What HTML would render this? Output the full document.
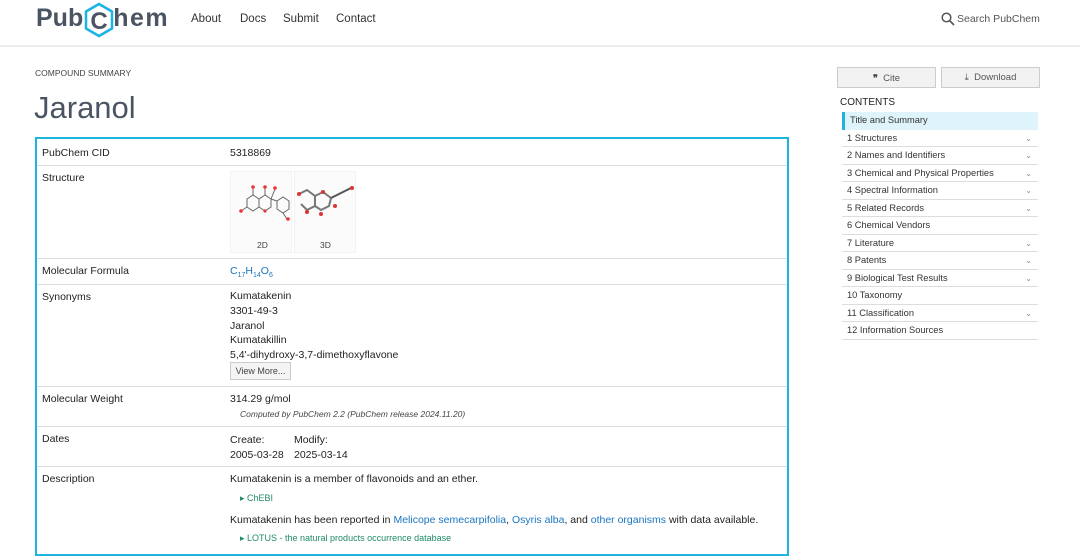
<!DOCTYPE html>
<html><head><meta charset="utf-8"><style>
*{margin:0;padding:0;box-sizing:border-box}
body{width:1080px;height:556px;overflow:hidden;background:#fff;font-family:"Liberation Sans",sans-serif;color:#222;font-size:10.5px;position:relative}
.a{position:absolute;white-space:nowrap}
.hdr{position:absolute;left:0;top:0;width:1080px;height:47px;border-bottom:2px solid #ececec}
.nav{font-size:11.5px;color:#333;top:13px}
.box{position:absolute;left:35px;top:137px;width:754px;height:419px;border:2px solid #1fb4dd}
.sep{position:absolute;left:0;width:750px;height:1px;background:#ddd}
.lbl{position:absolute;left:5px}
.val{position:absolute;left:193px}
.link{color:#1b76c1}
.grn{color:#1f8a6a;font-size:9px}
.toc{position:absolute;left:842px;width:196px;font-size:9.3px;color:#333}
.toc div{height:17.5px;line-height:17px;border-bottom:1px solid #ddd;padding-left:5px;position:relative}
.toc div span{position:absolute;right:6px;color:#888;font-size:8px}
.btn{position:absolute;top:67px;height:21px;border:1px solid #ccc;background:#f2f2f2;font-size:9.5px;color:#555;text-align:center;line-height:20px}
</style></head><body>
<div class="hdr">
<div class="a" style="left:36px;top:4px;font-size:25px;font-weight:bold;color:#4a5462;letter-spacing:0px">Pub<span style="display:inline-block;width:30px"></span><span style="letter-spacing:1.5px">hem</span></div>
<svg class="a" style="left:83px;top:2px" width="32" height="36" viewBox="0 0 32 36"><polygon points="16,2 29,9.5 29,26.5 16,34 3,26.5 3,9.5" fill="none" stroke="#1ab3e6" stroke-width="2.5"/><text x="16" y="27" text-anchor="middle" font-family="Liberation Sans" font-weight="bold" font-size="24" fill="#4a5462">C</text></svg>
<div class="a nav" style="left:191px">About</div>
<div class="a nav" style="left:240px">Docs</div>
<div class="a nav" style="left:283px">Submit</div>
<div class="a nav" style="left:336px">Contact</div>
<svg class="a" style="left:941px;top:12px" width="14" height="14"><circle cx="5.5" cy="5.5" r="4.3" fill="none" stroke="#555" stroke-width="1.5"/><line x1="8.5" y1="8.5" x2="13" y2="13" stroke="#555" stroke-width="1.6"/></svg>
<div class="a" style="left:957px;top:13px;font-size:10.5px;color:#555">Search PubChem</div>
</div>
<div class="a" style="left:35px;top:68px;font-size:8.5px;color:#444">COMPOUND SUMMARY</div>
<div class="a" style="left:34px;top:90px;font-size:31px;color:#4a5462">Jaranol</div>

<div class="box">
<div class="lbl" style="top:8px">PubChem CID</div><div class="val" style="top:8px">5318869</div>
<div class="sep" style="top:26px"></div>
<div class="lbl" style="top:33px">Structure</div>
<div class="a" style="left:193px;top:32px;width:62px;height:82px;background:#fbfbfb;border:1px solid #f2f2f2"></div>
<div class="a" style="left:257px;top:32px;width:62px;height:82px;background:#fbfbfb;border:1px solid #f2f2f2"></div>
<svg class="a" style="left:196px;top:40px" width="58" height="45"><g stroke="#666" fill="none" stroke-width="1"><polygon points="14,20 20,16 26,20 26,28 20,32 14,28"/><polygon points="26,20 32,16 38,20 38,28 32,32 26,28"/><polygon points="44,22 50,18 56,22 56,30 50,34 44,30"/><line x1="38" y1="20" x2="44" y2="22"/><line x1="14" y1="28" x2="8" y2="32"/><line x1="20" y1="16" x2="20" y2="9"/><line x1="32" y1="16" x2="32" y2="9"/><line x1="38" y1="20" x2="42" y2="10"/><line x1="50" y1="34" x2="54" y2="40"/></g><circle cx="20" cy="8" r="1.8" fill="#e33"/><circle cx="32" cy="8" r="1.8" fill="#e33"/><circle cx="42" cy="9" r="1.8" fill="#e33"/><circle cx="8" cy="32" r="1.8" fill="#e33"/><circle cx="32" cy="32" r="1.6" fill="#e33"/><circle cx="55" cy="40" r="1.8" fill="#e33"/></svg>
<svg class="a" style="left:258px;top:45px" width="60" height="35"><g stroke="#777" fill="none" stroke-width="2"><polyline points="4,10 12,6 20,12 20,22 12,26 6,20"/><polyline points="20,12 28,8 36,14 34,22 26,26 20,22"/><line x1="36" y1="14" x2="56" y2="4" stroke="#555"/></g><circle cx="4" cy="10" r="2" fill="#d33"/><circle cx="12" cy="28" r="2" fill="#d33"/><circle cx="26" cy="30" r="2" fill="#d33"/><circle cx="40" cy="22" r="2" fill="#d33"/><circle cx="57" cy="4" r="2" fill="#d33"/><circle cx="28" cy="8" r="2" fill="#d33"/></svg>
<div class="a" style="left:220px;top:101px;font-size:8.5px;color:#444">2D</div>
<div class="a" style="left:283px;top:101px;font-size:8.5px;color:#444">3D</div>
<div class="sep" style="top:119px"></div>
<div class="lbl" style="top:126px">Molecular Formula</div><div class="val link" style="top:126px">C<sub style="font-size:7px">17</sub>H<sub style="font-size:7px">14</sub>O<sub style="font-size:7px">6</sub></div>
<div class="sep" style="top:145px"></div>
<div class="lbl" style="top:152px">Synonyms</div>
<div class="val" style="top:150px;line-height:14.8px">Kumatakenin<br>3301-49-3<br>Jaranol<br>Kumatakillin<br>5,4'-dihydroxy-3,7-dimethoxyflavone</div>
<div class="a" style="left:193px;top:223px;width:61px;height:18px;border:1px solid #ccc;background:#f4f4f4;font-size:9px;color:#444;text-align:center;line-height:16px">View More...</div>
<div class="sep" style="top:247px"></div>
<div class="lbl" style="top:254px">Molecular Weight</div><div class="val" style="top:254px">314.29 g/mol</div>
<div class="a" style="left:203px;top:270px;font-size:8.5px;font-style:italic;color:#444">Computed by PubChem 2.2 (PubChem release 2024.11.20)</div>
<div class="sep" style="top:287px"></div>
<div class="lbl" style="top:294px">Dates</div><div class="val" style="top:294px;line-height:15px">Create:<br>2005-03-28</div><div class="a" style="left:257px;top:294px;line-height:15px">Modify:<br>2025-03-14</div>
<div class="sep" style="top:327px"></div>
<div class="lbl" style="top:334px">Description</div><div class="val" style="top:334px">Kumatakenin is a member of flavonoids and an ether.</div>
<div class="a grn" style="left:203px;top:354px">▸ ChEBI</div>
<div class="val" style="top:375px">Kumatakenin has been reported in <span class="link">Melicope semecarpifolia</span>, <span class="link">Osyris alba</span>, and <span class="link">other organisms</span> with data available.</div>
<div class="a grn" style="left:203px;top:394px">▸ LOTUS - the natural products occurrence database</div>
</div>

<div class="btn" style="left:837px;width:99px"><b style="font-size:9px;color:#444">❞</b>&nbsp; Cite</div>
<div class="btn" style="left:941px;width:99px">⤓&nbsp; Download</div>
<div class="a" style="left:840px;top:97px;font-size:10px;color:#222">CONTENTS</div>
<div class="toc" style="top:112px">
<div style="background:#dff3fa;border-left:3px solid #1fb4dd;border-bottom:0;padding-left:5px">Title and Summary</div>
<div>1 Structures<span>⌄</span></div>
<div>2 Names and Identifiers<span>⌄</span></div>
<div>3 Chemical and Physical Properties<span>⌄</span></div>
<div>4 Spectral Information<span>⌄</span></div>
<div>5 Related Records<span>⌄</span></div>
<div>6 Chemical Vendors</div>
<div>7 Literature<span>⌄</span></div>
<div>8 Patents<span>⌄</span></div>
<div>9 Biological Test Results<span>⌄</span></div>
<div>10 Taxonomy</div>
<div>11 Classification<span>⌄</span></div>
<div>12 Information Sources</div>
</div>
</body></html>
